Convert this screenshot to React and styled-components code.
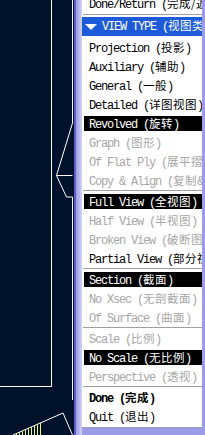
import React from 'react';
import styled, { createGlobalStyle } from 'styled-components';

const GlobalStyle = createGlobalStyle`
  html, body {
    margin: 0;
    padding: 0;
    background: #00112b;
    overflow: hidden;
  }
`;

const Screen = styled.div`
  display: flex;
  width: 205px;
  height: 435px;
  overflow: hidden;
  background: #00112b;
`;

const Canvas = styled.div`
  flex: none;
  width: 74px;
  height: 435px;

  svg {
    display: block;
  }
`;

const Window = styled.div`
  flex: none;
  align-self: flex-start;
  padding: 0 6px 7px 8px;
  background: linear-gradient(90deg, #5e5ec6 0, #5e5ec6 2px, #9c9ce6 2px, #b4b4ee 5px, #d6d6f6 8px, #9c9ce6 8px);
  border-bottom: 1px solid #3a3a90;
`;

const Menu = styled.div`
  width: 120px;
  margin-top: -6px;
  background: #fff;
  font-family: 'Liberation Mono', 'DejaVu Sans Mono', monospace;
  font-size: 12px;
  letter-spacing: -1.2px;
  padding-bottom: 1px;
  border-bottom: 1px solid #9c9cb8;
`;

const Row = styled.div`
  height: 19px;
  padding: 2px 0 2px 2px;
  box-sizing: border-box;
  margin-top: ${(p) => p.$gap || 0}px;
`;

const Label = styled.div`
  height: 15px;
  line-height: 15px;
  padding-left: 5px;
  white-space: nowrap;
  overflow: hidden;
  background: ${(p) => (p.$hl ? '#000' : 'transparent')};
  color: ${(p) => (p.$hl ? '#fff' : p.$dim ? '#a6a6a6' : '#000')};
  font-weight: ${(p) => (p.$bold ? 700 : 400)};
`;

const Cn = styled.span`
  font-family: 'Noto Sans CJK SC', sans-serif;
  font-size: 11.5px;
  letter-spacing: 0.5px;
`;

const Sep = styled.div`
  height: 0;
  margin: ${(p) => p.$mt || 0}px 0 0 1px;
  border-top: 1px solid #a0a0a0;
  border-bottom: 1px solid #fff;
`;

const Header = styled.div`
  display: flex;
  align-items: center;
  gap: 5px;
  height: 19px;
  margin-top: 1px;
  padding-left: 3px;
  background: #1d5bd8;
  color: #fff;
  white-space: nowrap;
  overflow: hidden;
  line-height: 19px;
`;

const Arrow = styled.span`
  flex: none;
  width: 0;
  height: 0;
  border-left: 6px solid transparent;
  border-right: 6px solid transparent;
  border-top: 6px solid #fff;
`;

const groups = [
  [
    { en: 'Projection', cn: '投影' },
    { en: 'Auxiliary', cn: '辅助' },
    { en: 'General', cn: '一般' },
    { en: 'Detailed', cn: '详图视图' },
    { en: 'Revolved', cn: '旋转', hl: true },
    { en: 'Graph', cn: '图形', dim: true },
    { en: 'Of Flat Ply', cn: '展平摺叠', dim: true },
    { en: 'Copy & Align', cn: '复制&对齐', dim: true },
  ],
  [
    { en: 'Full View', cn: '全视图', hl: true },
    { en: 'Half View', cn: '半视图', dim: true },
    { en: 'Broken View', cn: '破断图', dim: true },
    { en: 'Partial View', cn: '部分视图' },
  ],
  [
    { en: 'Section', cn: '截面', hl: true },
    { en: 'No Xsec', cn: '无剖截面', dim: true },
    { en: 'Of Surface', cn: '曲面', dim: true },
  ],
  [
    { en: 'Scale', cn: '比例', dim: true },
    { en: 'No Scale', cn: '无比例', hl: true },
    { en: 'Perspective', cn: '透视', dim: true },
  ],
  [
    { en: 'Done', cn: '完成', bold: true },
    { en: 'Quit', cn: '退出' },
  ],
];

const Item = ({ en, cn, hl, dim, bold, gap }) => (
  <Row $gap={gap}>
    <Label $hl={hl} $dim={dim} $bold={bold}>
      {en} (<Cn>{cn}</Cn>)
    </Label>
  </Row>
);

const hatch = Array.from({ length: 9 }, (_, i) => 16 + i * 3);

const Drawing = () => (
  <svg width="74" height="435" viewBox="0 0 74 435">
    <g stroke="#fff" strokeWidth="1" fill="none">
      <path d="M51.5 0 V386.5 H0" />
      <path d="M72.5 0 V123 L56.5 175.5 H72.5 M56.5 175.5 L66.5 197 H72.5 V400" />
      <path d="M13 435 L63 413 L72.5 435" />
    </g>
    <g stroke="#f4f46a" strokeWidth="1">
      {hatch.map((x) => (
        <line key={x} x1={x + 0.5} x2={x + 0.5} y1={435 - (x - 13) * 0.44} y2="435" />
      ))}
      <line x1="40.5" x2="40.5" y1="423" y2="435" />
    </g>
  </svg>
);

export default function App() {
  return (
    <>
      <GlobalStyle />
      <Screen>
        <Canvas>
          <Drawing />
        </Canvas>
        <Window>
          <Menu>
            <Row>
              <Label>
                Done/Return (<Cn>完成/返回</Cn>)
              </Label>
            </Row>
            <Sep $mt={1} />
            <Header>
              <Arrow />
              <span>
                VIEW TYPE (<Cn>视图类型</Cn>)
              </span>
            </Header>
            {groups.map((group, gi) => (
              <React.Fragment key={gi}>
                {gi > 0 && <Sep />}
                {group.map((item, ii) => (
                  <Item key={item.en} {...item} gap={gi === 0 && ii === 0 ? 2 : 0} />
                ))}
              </React.Fragment>
            ))}
          </Menu>
        </Window>
      </Screen>
    </>
  );
}
